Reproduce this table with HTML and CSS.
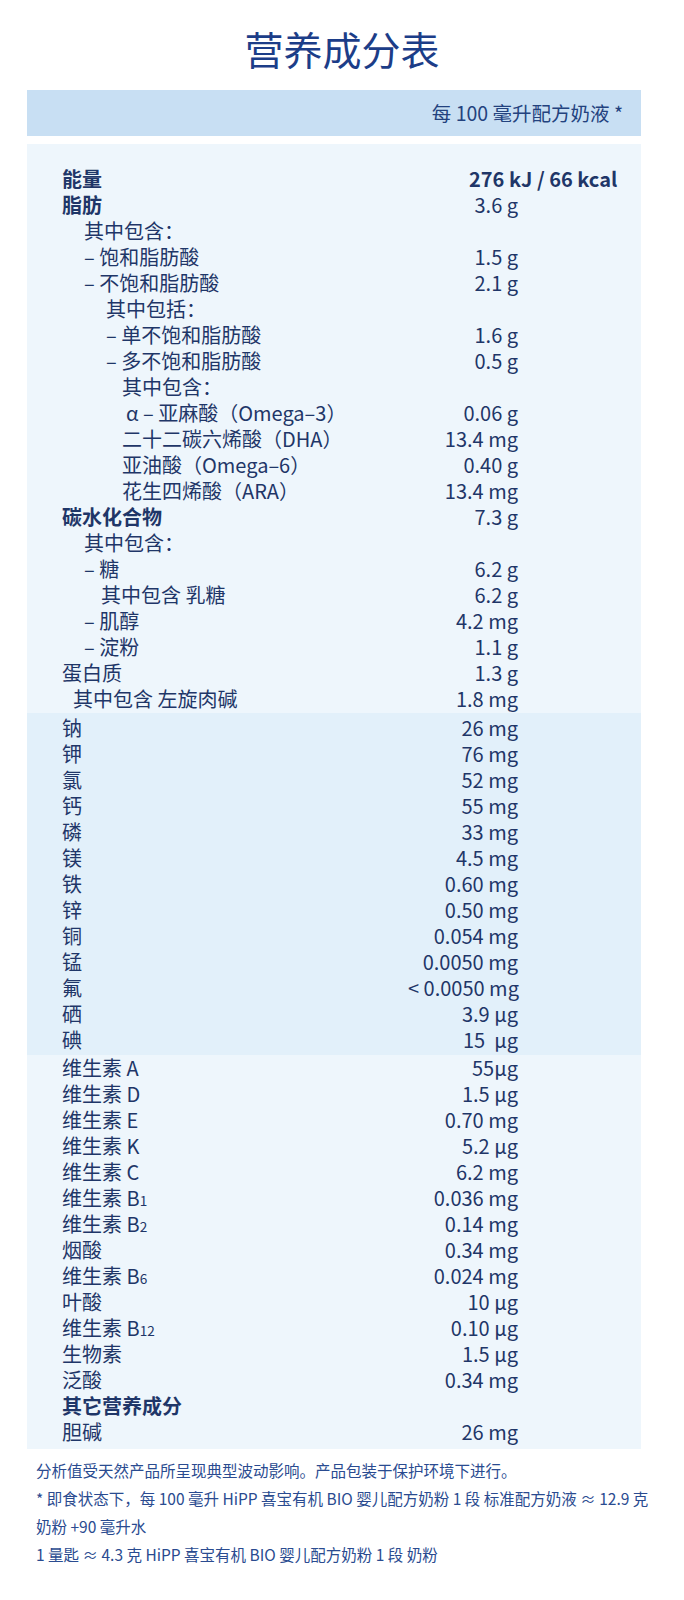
FILE: index.html
```html
<!DOCTYPE html>
<html lang="zh-CN">
<head>
<meta charset="utf-8">
<title>营养成分表</title>
<link rel="stylesheet" href="styles.css">
</head>
<body>
<h1 class="title">营养成分表</h1>
<div class="table">
  <div class="head">每 100 毫升配方奶液 *</div>
  <div class="sec sec-a">
    <div class="row bold"><span class="lbl">能量</span><span class="val val-energy">276 kJ / 66 kcal</span></div>
    <div class="row bold"><span class="lbl">脂肪</span><span class="val normal">3.6 g</span></div>
    <div class="row"><span class="lbl i1">其中包含：</span><span class="val"></span></div>
    <div class="row"><span class="lbl i1">– 饱和脂肪酸</span><span class="val">1.5 g</span></div>
    <div class="row"><span class="lbl i1">– 不饱和脂肪酸</span><span class="val">2.1 g</span></div>
    <div class="row"><span class="lbl i2">其中包括：</span><span class="val"></span></div>
    <div class="row"><span class="lbl i2">– 单不饱和脂肪酸</span><span class="val">1.6 g</span></div>
    <div class="row"><span class="lbl i2">– 多不饱和脂肪酸</span><span class="val">0.5 g</span></div>
    <div class="row"><span class="lbl i3">其中包含：</span><span class="val"></span></div>
    <div class="row"><span class="lbl i4">α – 亚麻酸（Omega–3）</span><span class="val">0.06 g</span></div>
    <div class="row"><span class="lbl i3">二十二碳六烯酸（DHA）</span><span class="val">13.4 mg</span></div>
    <div class="row"><span class="lbl i3">亚油酸（Omega–6）</span><span class="val">0.40 g</span></div>
    <div class="row"><span class="lbl i3">花生四烯酸（ARA）</span><span class="val">13.4 mg</span></div>
    <div class="row bold"><span class="lbl">碳水化合物</span><span class="val normal">7.3 g</span></div>
    <div class="row"><span class="lbl i1">其中包含：</span><span class="val"></span></div>
    <div class="row"><span class="lbl i1">– 糖</span><span class="val">6.2 g</span></div>
    <div class="row"><span class="lbl i5">其中包含 乳糖</span><span class="val">6.2 g</span></div>
    <div class="row"><span class="lbl i1">– 肌醇</span><span class="val">4.2 mg</span></div>
    <div class="row"><span class="lbl i1">– 淀粉</span><span class="val">1.1 g</span></div>
    <div class="row"><span class="lbl">蛋白质</span><span class="val">1.3 g</span></div>
    <div class="row"><span class="lbl i6">其中包含 左旋肉碱</span><span class="val">1.8 mg</span></div>
  </div>
  <div class="sec sec-b">
    <div class="row"><span class="lbl">钠</span><span class="val">26 mg</span></div>
    <div class="row"><span class="lbl">钾</span><span class="val">76 mg</span></div>
    <div class="row"><span class="lbl">氯</span><span class="val">52 mg</span></div>
    <div class="row"><span class="lbl">钙</span><span class="val">55 mg</span></div>
    <div class="row"><span class="lbl">磷</span><span class="val">33 mg</span></div>
    <div class="row"><span class="lbl">镁</span><span class="val">4.5 mg</span></div>
    <div class="row"><span class="lbl">铁</span><span class="val">0.60 mg</span></div>
    <div class="row"><span class="lbl">锌</span><span class="val">0.50 mg</span></div>
    <div class="row"><span class="lbl">铜</span><span class="val">0.054 mg</span></div>
    <div class="row"><span class="lbl">锰</span><span class="val">0.0050 mg</span></div>
    <div class="row"><span class="lbl">氟</span><span class="val">&lt; 0.0050 mg</span></div>
    <div class="row"><span class="lbl">硒</span><span class="val">3.9 μg</span></div>
    <div class="row"><span class="lbl">碘</span><span class="val">15 &nbsp;μg</span></div>
  </div>
  <div class="sec sec-c">
    <div class="row"><span class="lbl">维生素 A</span><span class="val">55μg</span></div>
    <div class="row"><span class="lbl">维生素 D</span><span class="val">1.5 μg</span></div>
    <div class="row"><span class="lbl">维生素 E</span><span class="val">0.70 mg</span></div>
    <div class="row"><span class="lbl">维生素 K</span><span class="val">5.2 μg</span></div>
    <div class="row"><span class="lbl">维生素 C</span><span class="val">6.2 mg</span></div>
    <div class="row"><span class="lbl">维生素 B<span class="sub">1</span></span><span class="val">0.036 mg</span></div>
    <div class="row"><span class="lbl">维生素 B<span class="sub">2</span></span><span class="val">0.14 mg</span></div>
    <div class="row"><span class="lbl">烟酸</span><span class="val">0.34 mg</span></div>
    <div class="row"><span class="lbl">维生素 B<span class="sub">6</span></span><span class="val">0.024 mg</span></div>
    <div class="row"><span class="lbl">叶酸</span><span class="val">10 μg</span></div>
    <div class="row"><span class="lbl">维生素 B<span class="sub">12</span></span><span class="val">0.10 μg</span></div>
    <div class="row"><span class="lbl">生物素</span><span class="val">1.5 μg</span></div>
    <div class="row"><span class="lbl">泛酸</span><span class="val">0.34 mg</span></div>
    <div class="row bold"><span class="lbl">其它营养成分</span><span class="val"></span></div>
    <div class="row"><span class="lbl">胆碱</span><span class="val">26 mg</span></div>
  </div>
</div>
<div class="notes">
  <p>分析值受天然产品所呈现典型波动影响。产品包装于保护环境下进行。</p>
  <p>* 即食状态下，每 100 毫升 HiPP 喜宝有机 BIO 婴儿配方奶粉 1 段 标准配方奶液 ≈ 12.9 克<br>奶粉 +90 毫升水</p>
  <p>1 量匙 ≈ 4.3 克 HiPP 喜宝有机 BIO 婴儿配方奶粉 1 段 奶粉</p>
</div>
</body>
</html>
```

FILE: styles.css
```css
html, body {
  margin: 0;
  padding: 0;
  background: #ffffff;
}
body {
  font-family: "Noto Sans CJK SC", "Noto Sans", sans-serif;
  color: #1f3668;
}
.title {
  margin: 0;
  padding-top: 24px;
  height: 90px;
  box-sizing: border-box;
  text-align: center;
  font-size: 39px;
  line-height: 48px;
  font-weight: 400;
  color: #1c3d88;
}
.table {
  margin: 0 43px 0 27px;
}
.head {
  height: 46px;
  background: #c8dff3;
  text-align: right;
  padding-right: 18px;
  font-size: 19.5px;
  line-height: 46px;
  color: #23427e;
  margin-bottom: 8px;
}
.sec-a {
  background: #eef6fc;
  padding-top: 22px;
  padding-bottom: 1px;
}
.sec-b {
  background: #e2f0fa;
  padding-top: 2px;
  padding-bottom: 2px;
}
.sec-c {
  background: #eef6fc;
  padding-bottom: 4px;
}
.row {
  display: flex;
  height: 26px;
  line-height: 26px;
  font-size: 20px;
  padding-left: 35px;
  padding-right: 123px;
  white-space: nowrap;
}
.lbl {
  flex: 1;
}
.val {
  width: 110px;
  text-align: right;
}
.bold {
  font-weight: 700;
}
.normal {
  font-weight: 400;
}
.val-energy {
  text-align: left;
  padding-left: 61px;
  box-sizing: border-box;
  overflow: visible;
}
.i1 { padding-left: 22px; }
.i2 { padding-left: 44px; }
.i3 { padding-left: 60px; }
.i4 { padding-left: 64px; }
.i5 { padding-left: 39px; }
.i6 { padding-left: 11px; }
.sub {
  font-size: 0.68em;
}
.notes {
  padding: 7px 20px 0 36px;
  font-size: 15.5px;
  line-height: 28px;
  color: #2a4b90;
}
.notes p {
  margin: 0;
}
```
